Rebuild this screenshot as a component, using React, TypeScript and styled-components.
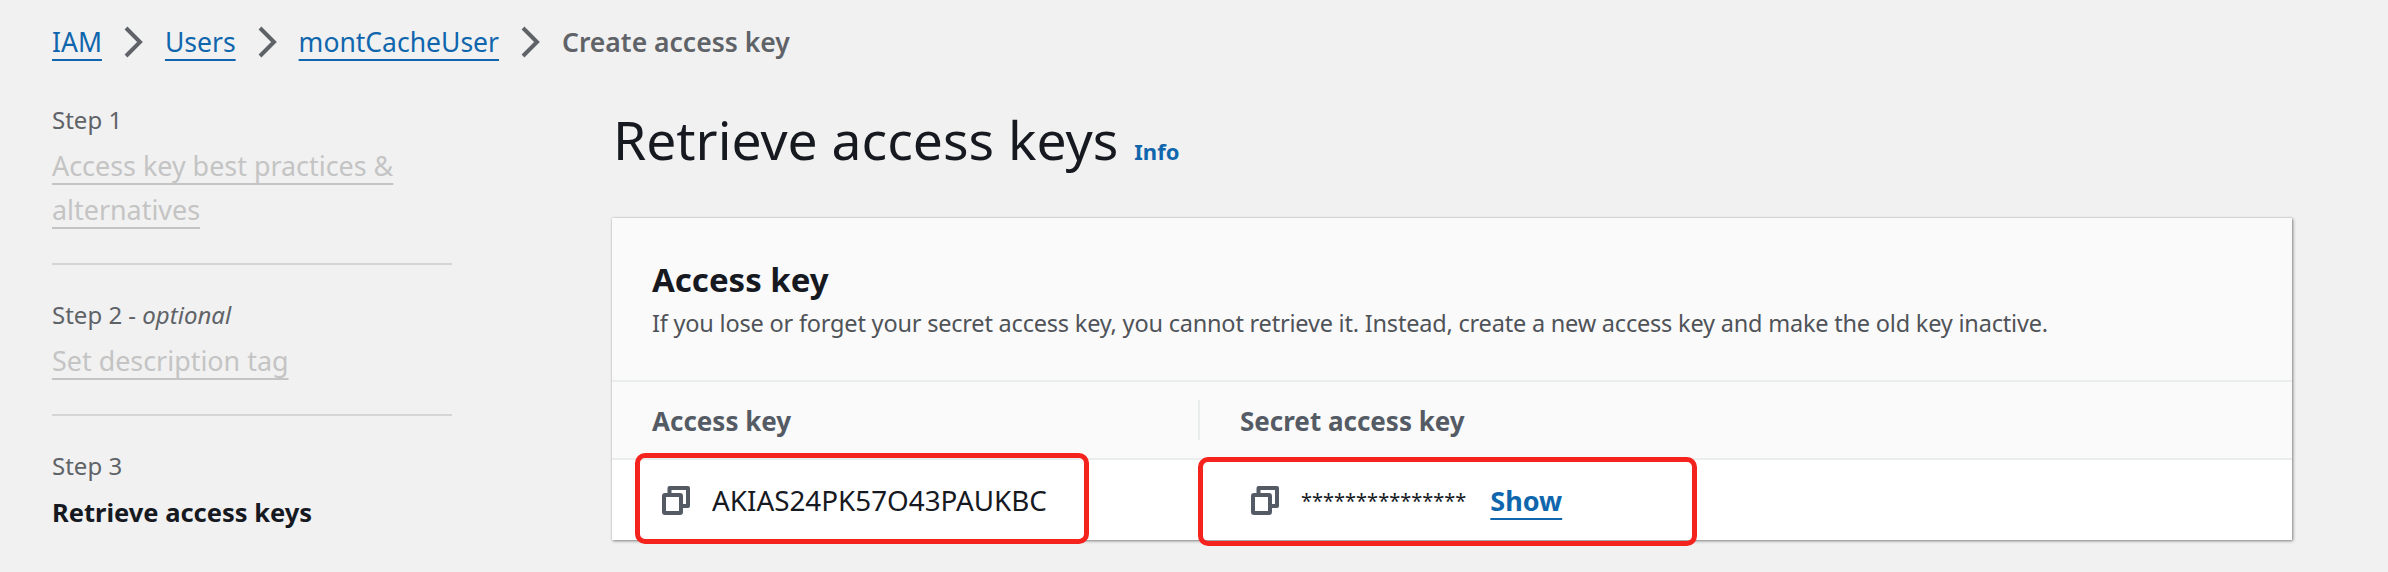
import React from "react";
import styled, { createGlobalStyle } from "styled-components";

const Global = createGlobalStyle`
  html, body { margin: 0; padding: 0; background: #f1f1f1; }
  body { font-family: "Noto Sans", "Open Sans", sans-serif; width: 2388px; height: 572px; overflow: hidden; }
`;

const Page = styled.div`
  width: 2388px;
  height: 572px;
  box-sizing: border-box;
  padding: 22px 96px 0 52px;
  background: #f1f1f1;
`;

const Crumbs = styled.nav`
  display: flex;
  align-items: center;
  height: 40px;
  font-size: 26.5px;
  line-height: 40px;
`;

const Crumb = styled.a`
  color: #0f66ad;
  text-decoration: underline;
  text-decoration-thickness: 2px;
  text-underline-offset: 7px;
`;

const CrumbCurrent = styled.span`
  color: #5f6368;
  font-weight: 600;
`;

const Chevron = styled.svg`
  width: 20px;
  height: 32px;
  margin: 0 21.5px;
  flex: none;
  fill: none;
  stroke: #5f6368;
  stroke-width: 4;
`;

const Main = styled.div`
  display: grid;
  grid-template-columns: 400px 1680px;
  column-gap: 160px;
`;

const Steps = styled.ol`
  list-style: none;
  margin: 0;
  padding: 42px 0 0;
`;

const Step = styled.li`
  padding-bottom: 31px;
  margin-bottom: 34px;
  border-bottom: 2px solid #d5d5d5;
  &:last-child { border-bottom: 0; }
`;

const StepLabel = styled.div`
  color: #5f6368;
  font-size: 24px;
  line-height: 32px;
  em { font-style: italic; }
`;

const StepLink = styled.a`
  display: block;
  margin-top: 8px;
  color: #c4c4c4;
  font-size: 26.9px;
  line-height: 44px;
  span {
    text-decoration: underline;
    text-decoration-thickness: 2px;
    text-underline-offset: 7px;
  }
`;

const StepCurrent = styled.div`
  margin-top: 8px;
  color: #16191f;
  font-size: 25.5px;
  font-weight: 700;
  line-height: 44px;
`;

const Content = styled.section`
  display: flex;
  flex-direction: column;
`;

const HeadRow = styled.div`
  display: flex;
  align-items: baseline;
  gap: 16px;
  height: 116px;
  margin-top: 40px;
  padding-left: 1px;
`;

const Title = styled.h1`
  margin: 0;
  color: #16191f;
  font-size: 53.4px;
  font-weight: 400;
  line-height: 76px;
`;

const Info = styled.a`
  color: #0f66ad;
  font-size: 22px;
  font-weight: 700;
`;

const Card = styled.div`
  position: relative;
  height: 322px;
  background: #fafafa;
  box-shadow: 1px 1px 3px 0 rgba(0, 0, 0, 0.45), 0 0 1px 0 rgba(0, 0, 0, 0.25);
`;

const CardHead = styled.header`
  box-sizing: border-box;
  height: 164px;
  padding: 35px 40px 0;
  border-bottom: 2px solid #eaeded;
`;

const CardTitle = styled.h2`
  margin: 0;
  color: #16191f;
  font-size: 33px;
  font-weight: 700;
  line-height: 53px;
`;

const CardText = styled.p`
  margin: 0;
  color: #4f5358;
  font-size: 23.5px;
  letter-spacing: -0.2px;
  line-height: 34px;
`;

const Columns = styled.div`
  display: grid;
  grid-template-columns: 586px 1fr;
`;

const HeadCell = styled.div<{ $divided?: boolean }>`
  display: flex;
  align-items: center;
  box-sizing: border-box;
  height: 78px;
  padding-top: 2px;
  padding-left: ${(p) => (p.$divided ? "42px" : "40px")};
  border-bottom: 2px solid #eaeded;
  color: #545b64;
  font-size: 26px;
  font-weight: 700;
  position: relative;
  ${(p) =>
    p.$divided
      ? `&::before { content: ""; position: absolute; left: 0; top: 18px; width: 2px; height: 40px; background: #eaeded; }`
      : ""}
`;

const ValueCell = styled.div<{ $second?: boolean }>`
  display: flex;
  align-items: center;
  height: 80px;
  background: #fff;
  padding-left: ${(p) => (p.$second ? "53px" : "50px")};
  color: #16191f;
  font-size: 27.8px;
`;

const CopyIcon = styled.svg`
  width: 28px;
  height: 29px;
  flex: none;
  fill: none;
  stroke: #545b64;
  stroke-width: 4;
  stroke-linejoin: round;
  margin-right: 22px;
`;

const Stars = styled.span`
  font-size: 20px;
  margin-right: 24px;
`;

const ShowLink = styled.a`
  color: #0f66ad;
  font-size: 27px;
  font-weight: 700;
  text-decoration: underline;
  text-decoration-thickness: 2px;
  text-underline-offset: 7px;
`;

const Callout = styled.div<{ $left: number; $top: number; $w: number; $h: number }>`
  position: absolute;
  box-sizing: border-box;
  left: ${(p) => p.$left}px;
  top: ${(p) => p.$top}px;
  width: ${(p) => p.$w}px;
  height: ${(p) => p.$h}px;
  border: 5px solid #f5231d;
  border-radius: 10px;
`;

const Sep = () => (
  <Chevron viewBox="0 0 20 32">
    <path d="M3 2l14 14L3 30" />
  </Chevron>
);

const Copy = () => (
  <CopyIcon viewBox="0 0 28 29">
    <rect x="2" y="9" width="17" height="18" rx="1" />
    <path d="M7.5 7V2H26v18h-5" />
  </CopyIcon>
);

export default function App() {
  return (
    <Page>
      <Global />
      <Crumbs>
        <Crumb>IAM</Crumb>
        <Sep />
        <Crumb>Users</Crumb>
        <Sep />
        <Crumb>montCacheUser</Crumb>
        <Sep />
        <CrumbCurrent>Create access key</CrumbCurrent>
      </Crumbs>
      <Main>
        <Steps>
          <Step>
            <StepLabel>Step 1</StepLabel>
            <StepLink>
              <span>Access key best practices &amp; alternatives</span>
            </StepLink>
          </Step>
          <Step>
            <StepLabel>
              Step 2 - <em>optional</em>
            </StepLabel>
            <StepLink>
              <span>Set description tag</span>
            </StepLink>
          </Step>
          <Step>
            <StepLabel>Step 3</StepLabel>
            <StepCurrent>Retrieve access keys</StepCurrent>
          </Step>
        </Steps>
        <Content>
          <HeadRow>
            <Title>Retrieve access keys</Title>
            <Info>Info</Info>
          </HeadRow>
          <Card>
            <CardHead>
              <CardTitle>Access key</CardTitle>
              <CardText>
                If you lose or forget your secret access key, you cannot retrieve it. Instead, create a new access key and make the old key inactive.
              </CardText>
            </CardHead>
            <Columns>
              <HeadCell>Access key</HeadCell>
              <HeadCell $divided>Secret access key</HeadCell>
              <ValueCell>
                <Copy />
                AKIAS24PK57O43PAUKBC
              </ValueCell>
              <ValueCell $second>
                <Copy />
                <Stars>***************</Stars>
                <ShowLink>Show</ShowLink>
              </ValueCell>
            </Columns>
            <Callout $left={23} $top={235} $w={454} $h={91} />
            <Callout $left={586} $top={239} $w={499} $h={89} />
          </Card>
        </Content>
      </Main>
    </Page>
  );
}
